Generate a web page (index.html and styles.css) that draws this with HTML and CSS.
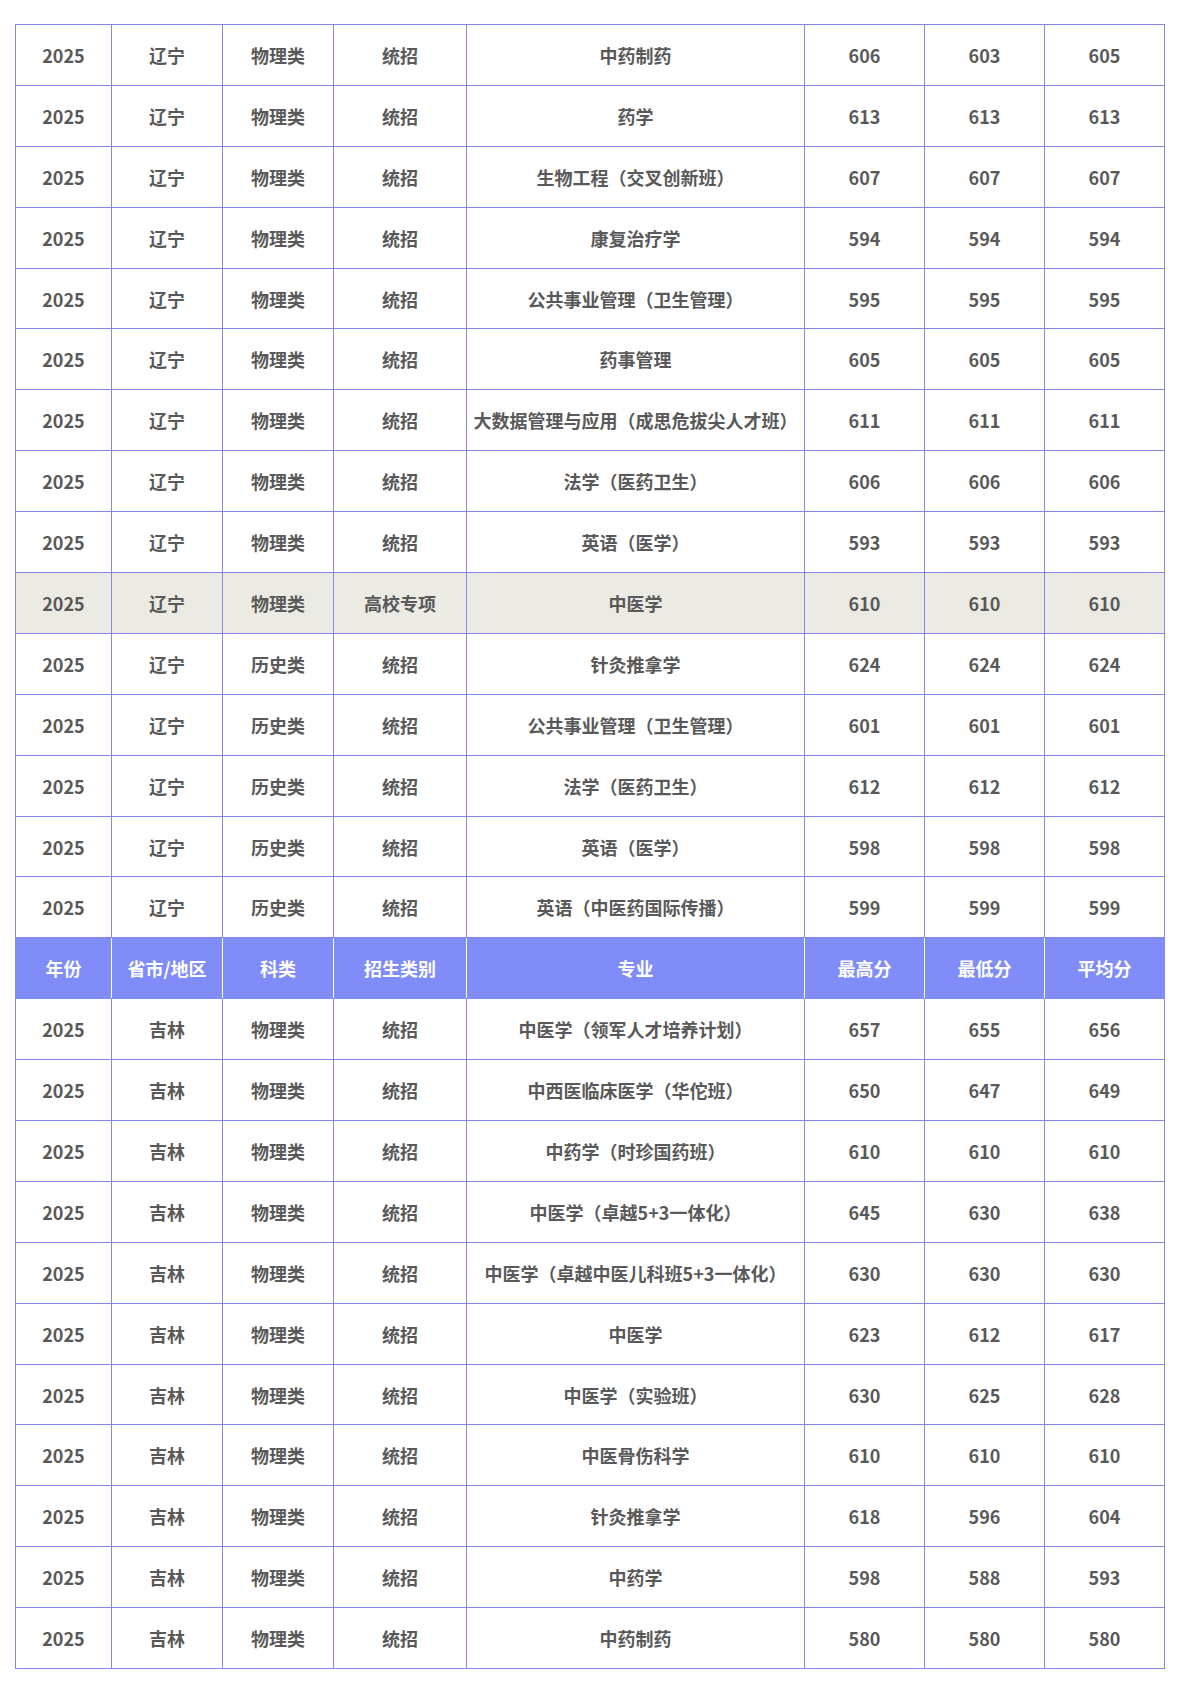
FILE: index.html
```html
<!DOCTYPE html>
<html lang="zh-CN">
<head>
<meta charset="utf-8">
<title>录取分数</title>
<link rel="stylesheet" href="styles.css">
</head>
<body>
<div class="page">
<table class="scores">
<colgroup>
<col class="c-year"><col class="c-prov"><col class="c-type"><col class="c-cat"><col class="c-major"><col class="c-num"><col class="c-num"><col class="c-num">
</colgroup>
<tbody>
<tr><td>2025</td><td>辽宁</td><td>物理类</td><td>统招</td><td>中药制药</td><td>606</td><td>603</td><td>605</td></tr>
<tr><td>2025</td><td>辽宁</td><td>物理类</td><td>统招</td><td>药学</td><td>613</td><td>613</td><td>613</td></tr>
<tr><td>2025</td><td>辽宁</td><td>物理类</td><td>统招</td><td>生物工程（交叉创新班）</td><td>607</td><td>607</td><td>607</td></tr>
<tr><td>2025</td><td>辽宁</td><td>物理类</td><td>统招</td><td>康复治疗学</td><td>594</td><td>594</td><td>594</td></tr>
<tr><td>2025</td><td>辽宁</td><td>物理类</td><td>统招</td><td>公共事业管理（卫生管理）</td><td>595</td><td>595</td><td>595</td></tr>
<tr><td>2025</td><td>辽宁</td><td>物理类</td><td>统招</td><td>药事管理</td><td>605</td><td>605</td><td>605</td></tr>
<tr><td>2025</td><td>辽宁</td><td>物理类</td><td>统招</td><td>大数据管理与应用（成思危拔尖人才班）</td><td>611</td><td>611</td><td>611</td></tr>
<tr><td>2025</td><td>辽宁</td><td>物理类</td><td>统招</td><td>法学（医药卫生）</td><td>606</td><td>606</td><td>606</td></tr>
<tr><td>2025</td><td>辽宁</td><td>物理类</td><td>统招</td><td>英语（医学）</td><td>593</td><td>593</td><td>593</td></tr>
<tr class="hl"><td>2025</td><td>辽宁</td><td>物理类</td><td>高校专项</td><td>中医学</td><td>610</td><td>610</td><td>610</td></tr>
<tr><td>2025</td><td>辽宁</td><td>历史类</td><td>统招</td><td>针灸推拿学</td><td>624</td><td>624</td><td>624</td></tr>
<tr><td>2025</td><td>辽宁</td><td>历史类</td><td>统招</td><td>公共事业管理（卫生管理）</td><td>601</td><td>601</td><td>601</td></tr>
<tr><td>2025</td><td>辽宁</td><td>历史类</td><td>统招</td><td>法学（医药卫生）</td><td>612</td><td>612</td><td>612</td></tr>
<tr><td>2025</td><td>辽宁</td><td>历史类</td><td>统招</td><td>英语（医学）</td><td>598</td><td>598</td><td>598</td></tr>
<tr><td>2025</td><td>辽宁</td><td>历史类</td><td>统招</td><td>英语（中医药国际传播）</td><td>599</td><td>599</td><td>599</td></tr>
<tr class="head"><th>年份</th><th>省市/地区</th><th>科类</th><th>招生类别</th><th>专业</th><th>最高分</th><th>最低分</th><th>平均分</th></tr>
<tr><td>2025</td><td>吉林</td><td>物理类</td><td>统招</td><td>中医学（领军人才培养计划）</td><td>657</td><td>655</td><td>656</td></tr>
<tr><td>2025</td><td>吉林</td><td>物理类</td><td>统招</td><td>中西医临床医学（华佗班）</td><td>650</td><td>647</td><td>649</td></tr>
<tr><td>2025</td><td>吉林</td><td>物理类</td><td>统招</td><td>中药学（时珍国药班）</td><td>610</td><td>610</td><td>610</td></tr>
<tr><td>2025</td><td>吉林</td><td>物理类</td><td>统招</td><td>中医学（卓越5+3一体化）</td><td>645</td><td>630</td><td>638</td></tr>
<tr><td>2025</td><td>吉林</td><td>物理类</td><td>统招</td><td>中医学（卓越中医儿科班5+3一体化）</td><td>630</td><td>630</td><td>630</td></tr>
<tr><td>2025</td><td>吉林</td><td>物理类</td><td>统招</td><td>中医学</td><td>623</td><td>612</td><td>617</td></tr>
<tr><td>2025</td><td>吉林</td><td>物理类</td><td>统招</td><td>中医学（实验班）</td><td>630</td><td>625</td><td>628</td></tr>
<tr><td>2025</td><td>吉林</td><td>物理类</td><td>统招</td><td>中医骨伤科学</td><td>610</td><td>610</td><td>610</td></tr>
<tr><td>2025</td><td>吉林</td><td>物理类</td><td>统招</td><td>针灸推拿学</td><td>618</td><td>596</td><td>604</td></tr>
<tr><td>2025</td><td>吉林</td><td>物理类</td><td>统招</td><td>中药学</td><td>598</td><td>588</td><td>593</td></tr>
<tr><td>2025</td><td>吉林</td><td>物理类</td><td>统招</td><td>中药制药</td><td>580</td><td>580</td><td>580</td></tr>
</tbody>
</table>
</div>
</body>
</html>
```

FILE: styles.css
```css
html, body {
  margin: 0;
  padding: 0;
  background: #ffffff;
}

.page {
  padding: 24px 0 0 15px;
}

.scores {
  border-collapse: collapse;
  table-layout: fixed;
  width: 1150px;
  font-family: "Noto Sans CJK SC", "Noto Sans", sans-serif;
  font-size: 18px;
  font-weight: 700;
  color: #595959;
}

.c-year { width: 96px; }
.c-prov { width: 111px; }
.c-type { width: 111px; }
.c-cat { width: 133px; }
.c-major { width: 338px; }
.c-num { width: 120px; }

.scores td,
.scores th {
  border: 1px solid #8686e4;
  height: 59.9px;
  padding: 0 4px;
  text-align: center;
  vertical-align: middle;
  line-height: 24px;
  white-space: nowrap;
}

.scores tr.hl td {
  background: #ecebe3;
}

.scores tr.head th {
  background: #808df8;
  color: #ffffff;
  font-weight: 700;
  border-left-color: #ffffff;
  border-right-color: #ffffff;
  border-top-color: #808df8;
  border-bottom-color: #808df8;
}

.scores tr.head th:first-child {
  border-left-color: #808df8;
}

.scores tr.head th:last-child {
  border-right-color: #808df8;
}
```
